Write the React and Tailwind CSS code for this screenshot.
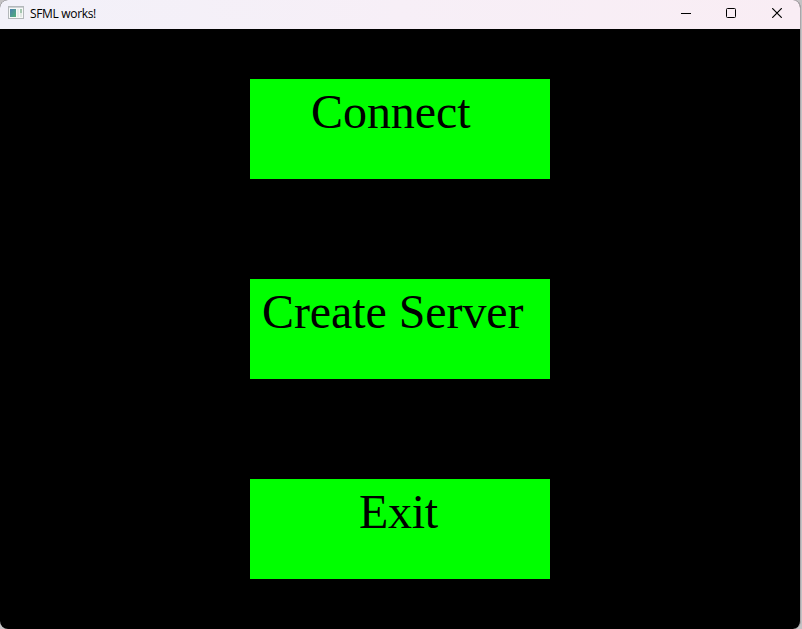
const menu = [
  { label: "Connect", style: "pl-[61px] tracking-[-0.05px]" },
  { label: "Create Server", style: "pl-[12px] tracking-[-0.08px]" },
  { label: "Exit", style: "pl-[109px] tracking-[-0.3px]" },
];

function AppIcon() {
  return (
    <svg width="16" height="14" viewBox="0 0 16 14" shapeRendering="crispEdges">
      <defs>
        <linearGradient id="pane" x1="0" y1="0" x2="1" y2="1">
          <stop offset="0" stopColor="#4a7fb0" />
          <stop offset="1" stopColor="#52b077" />
        </linearGradient>
      </defs>
      <rect x="0" y="0" width="16" height="13" fill="#b4b8bb" />
      <rect x="1" y="1" width="14" height="1" fill="#cdd1d4" />
      <rect x="1" y="2" width="14" height="10" fill="#f7f9f8" />
      <rect x="2" y="3" width="6" height="8" fill="url(#pane)" />
      <rect x="9" y="3" width="2" height="8" fill="#e6ecea" />
      <rect x="12" y="3" width="2" height="4" fill="#a5c6b0" />
      <rect x="12" y="7" width="2" height="4" fill="#e3e9e5" />
    </svg>
  );
}

function TitleBar() {
  return (
    <header className="flex h-[29px] items-start bg-linear-to-r from-[#f2f1f9] via-[#f7eff7] to-[#f9edf4]">
      <div className="pt-[6px] pl-[8px]">
        <AppIcon />
      </div>
      <span className="w-[90px] pt-[6px] pl-[6px] font-['Open_Sans',sans-serif] text-[12px] leading-4 tracking-[-0.33px] whitespace-nowrap text-black">
        SFML works!
      </span>
      <div className="ml-auto flex pr-[18px] pt-[8px] text-black">
        <svg width="10" height="10" className="mr-[35px]" stroke="currentColor">
          <path d="M0 5.5h10" />
        </svg>
        <svg width="10" height="10" className="mr-[36px]" fill="none" stroke="currentColor">
          <rect x="0.5" y="0.5" width="9" height="9" rx="1" />
        </svg>
        <svg width="10" height="10" stroke="currentColor" strokeWidth="1.2">
          <path d="M0.2 0.2l9.6 9.6M9.8 0.2l-9.6 9.6" />
        </svg>
      </div>
    </header>
  );
}

export default function App() {
  return (
    <div className="h-[629px] w-[802px] overflow-hidden bg-[#c4c2c4] pr-px">
      <div className="h-full overflow-hidden rounded-[8px] border-r border-[#aaa6aa] bg-black">
        <TitleBar />
        <main className="flex flex-col gap-[100px] pt-[50px] pl-[250px]">
          {menu.map(({ label, style }) => (
            <button
              key={label}
              className={`h-[100px] w-[300px] bg-[#00ff00] text-left font-['Liberation_Serif',serif] text-[48px] text-black ${style}`}
            >
              <span className="block h-[100px] pt-[9px] leading-[48px] whitespace-nowrap">{label}</span>
            </button>
          ))}
        </main>
      </div>
    </div>
  );
}
